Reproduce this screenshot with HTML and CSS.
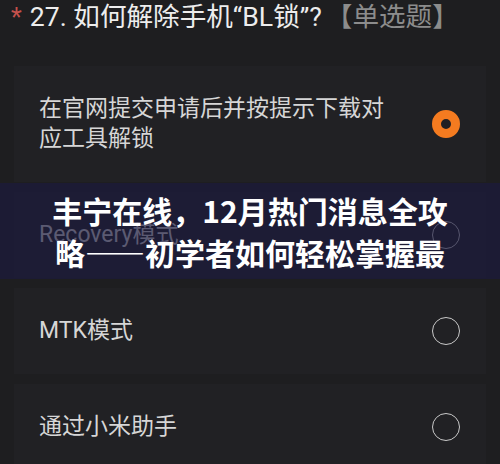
FILE: index.html
```html
<!DOCTYPE html>
<html lang="zh-CN">
<head>
  <meta charset="UTF-8">
  <title>单选题</title>
  <link rel="stylesheet" href="styles.css">
</head>
<body>

  <!-- 题目 -->
  <div class="pergunta">
    <span class="obrigatorio">*</span>27. 如何解除手机“BL锁”?<span class="tipo">【单选题】</span>
  </div>

  <!-- 选项 -->
  <div class="opcoes">
    <div class="opcao">
      <span class="texto">在官网提交申请后并按提示下载对应工具解锁</span>
      <span class="radio marcado"></span>
    </div>
    <div class="opcao">
      <span class="texto">Recovery模式</span>
      <span class="radio"></span>
    </div>
    <div class="opcao">
      <span class="texto">MTK模式</span>
      <span class="radio"></span>
    </div>
    <div class="opcao">
      <span class="texto">通过小米助手</span>
      <span class="radio"></span>
    </div>
  </div>

  <!-- 标题遮罩 -->
  <div class="faixa">
    <h1>丰宁在线，12月热门消息全攻略——初学者如何轻松掌握最</h1>
  </div>

</body>
</html>
```

FILE: styles.css
```css
* {
  box-sizing: border-box;
}

body {
  margin: 0;
  padding: 0;
  width: 500px;
  height: 464px;
  overflow: hidden;
  position: relative;
  background: #1e1e20;
  font-family: Roboto, 'Noto Sans CJK SC', sans-serif;
}

.pergunta {
  margin-top: 1px;
  padding-left: 11px;
  font-size: 26.6px;
  line-height: 32px;
  color: #ededed;
  white-space: nowrap;
}

.obrigatorio {
  color: #c4514c;
  font-size: 25px;
  margin-right: 8px;
}

.tipo {
  color: #8c8c8c;
  margin-left: 4px;
}

.opcoes {
  display: flex;
  flex-direction: column;
  gap: 10px;
  margin: 32px 14px 0;
}

.opcao {
  display: flex;
  align-items: center;
  justify-content: space-between;
  padding: 28px 26px 28px 25px;
  background: #212124;
}

.texto {
  max-width: 350px;
  font-size: 23px;
  line-height: 30px;
  color: #d6d6d6;
}

.radio {
  flex-shrink: 0;
  width: 28px;
  height: 28px;
  border-radius: 50%;
  border: 1.5px solid #c9c9c9;
}

.radio.marcado {
  border: 9px solid #f47b20;
  background: #1f1f23;
}

/* faixa por cima do conteudo */
.faixa {
  position: absolute;
  left: 0;
  top: 183px;
  width: 100%;
  height: 96px;
  background: rgba(28, 26, 62, 0.66);
  display: flex;
  justify-content: center;
  align-items: center;
}

.faixa h1 {
  margin: 0;
  width: 400px;
  text-align: center;
  font-family: 'Noto Sans CJK SC', sans-serif;
  font-weight: 700;
  font-size: 30px;
  line-height: 42px;
  color: #ffffff;
}
```
